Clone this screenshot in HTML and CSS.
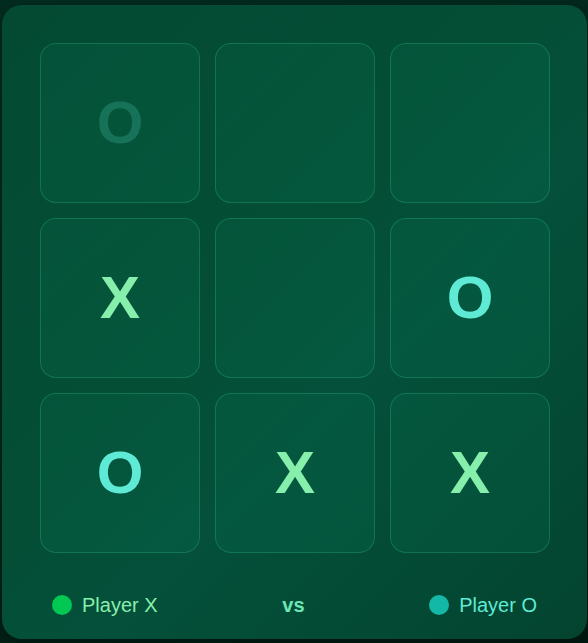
FILE: index.html
```html
<!DOCTYPE html>
<html lang="en">
<head>
<meta charset="utf-8">
<title>Tic Tac Toe</title>
<link rel="stylesheet" href="styles.css">
</head>
<body>
<div class="card">
  <div class="board">
    <div class="cell o faded">O</div>
    <div class="cell"></div>
    <div class="cell"></div>
    <div class="cell x">X</div>
    <div class="cell"></div>
    <div class="cell o">O</div>
    <div class="cell o">O</div>
    <div class="cell x">X</div>
    <div class="cell x">X</div>
  </div>
  <div class="footer">
    <div class="player player-x"><span class="dot"></span>Player X</div>
    <div class="vs">vs</div>
    <div class="player player-o"><span class="dot"></span>Player O</div>
  </div>
</div>
</body>
</html>
```
FILE: styles.css
```css
html, body {
  margin: 0;
  height: 100%;
}
body {
  background: linear-gradient(160deg, #032d21 0%, #022519 60%, #011a11 100%);
  font-family: "Liberation Sans", Arial, sans-serif;
  padding: 5px 0 0 2px;
  box-sizing: border-box;
}
.card {
  width: 585px;
  height: 634px;
  box-sizing: border-box;
  padding: 38px 37px 0 38px;
  border-radius: 20px;
  background: linear-gradient(135deg, #044a33 0%, #044e36 45%, #04503a 60%, #03442f 100%);
  box-shadow: 0 4px 20px rgba(0, 0, 0, 0.35);
}
.board {
  display: grid;
  grid-template-columns: repeat(3, 160px);
  grid-auto-rows: 160px;
  gap: 15px;
}
.cell {
  box-sizing: border-box;
  border: 1px solid rgba(52, 211, 153, 0.25);
  border-radius: 16px;
  background: linear-gradient(135deg, rgba(16, 185, 129, 0.07), rgba(16, 185, 129, 0.09));
  display: flex;
  align-items: center;
  justify-content: center;
  font-size: 60px;
  font-weight: 700;
  line-height: 1;
}
.x { color: #86efac; }
.o { color: #5eead4; }
.o.faded { color: rgba(94, 234, 212, 0.2); }
.footer {
  display: flex;
  justify-content: space-between;
  align-items: center;
  height: 24px;
  margin-top: 40px;
  padding: 0 13px 0 12px;
}
.player {
  display: flex;
  align-items: center;
  gap: 10px;
  font-size: 20px;
}
.dot {
  width: 20px;
  height: 20px;
  border-radius: 50%;
}
.player-x { color: #86efac; }
.player-x .dot { background: #00c853; }
.player-o { color: #5eead4; }
.player-o .dot { background: #14b8a6; }
.vs {
  font-size: 20px;
  font-weight: 700;
  color: #6ee7b7;
}
```
